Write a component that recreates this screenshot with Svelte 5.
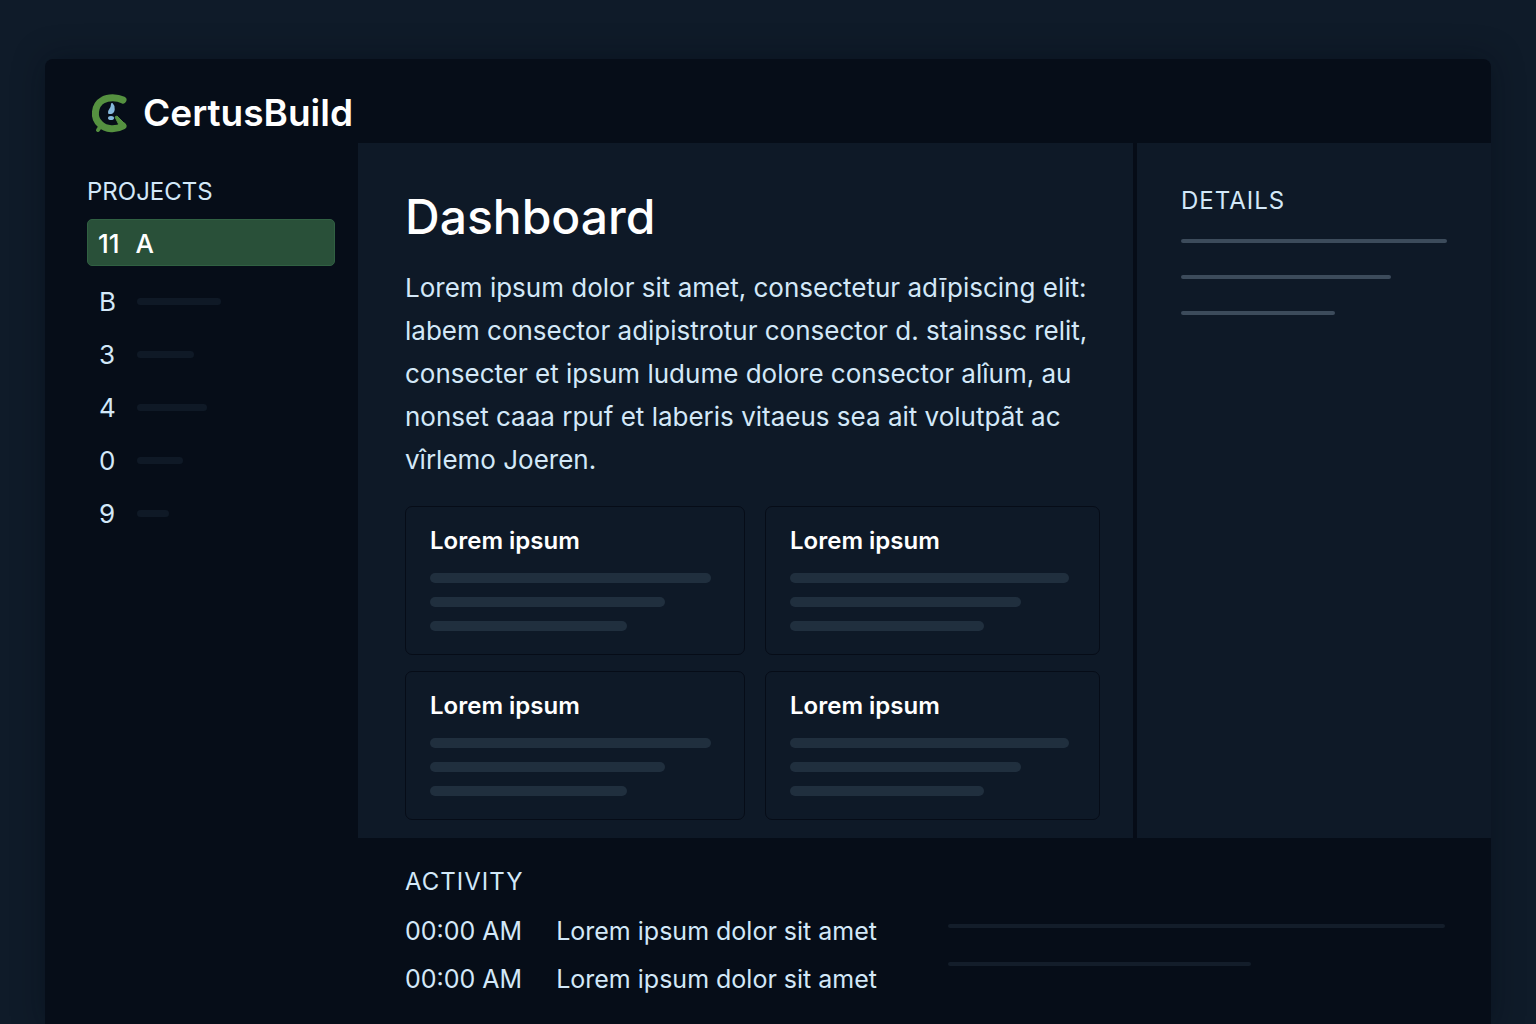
<script>
  const projects = [
    { mark: 'B', width: 84 },
    { mark: '3', width: 57 },
    { mark: '4', width: 70 },
    { mark: '0', width: 46 },
    { mark: '9', width: 32 },
  ];
  const cards = [
    { title: 'Lorem ipsum', bars: [97, 81, 68] },
    { title: 'Lorem ipsum', bars: [98, 81, 68] },
    { title: 'Lorem ipsum', bars: [97, 81, 68] },
    { title: 'Lorem ipsum', bars: [98, 81, 68] },
  ];
  const details = [100, 79, 58];
  const activity = [
    { time: '00:00 AM', text: 'Lorem ipsum dolor sit amet', bar: 100 },
    { time: '00:00 AM', text: 'Lorem ipsum dolor sit amet', bar: 61 },
  ];
</script>

<div class="page">
  <div class="window">
    <header class="topbar">
      <a class="brand" href="#home">
        <svg class="logo" viewBox="0 0 38 42" aria-hidden="true">
          <path d="M33 8C27 5 18 5 13 8C4 13 3 26 10 32C16 38 26 38 33 34" fill="none" stroke="#559140" stroke-width="7" stroke-linecap="round" stroke-linejoin="round" />
          <path d="M25 25L27 24L36 33L33 37L29 33Z" fill="#559140" stroke="#559140" stroke-width="1" stroke-linejoin="round" />
          <path d="M10 35L8 38" stroke="#559140" stroke-width="4" stroke-linecap="round" />
          <path d="M22 12C25 15 24 20 21 21H19C18 18 22 18 22 12Z" fill="#85b8dc" stroke="#85b8dc" stroke-width="2" stroke-linejoin="round" />
          <ellipse cx="21" cy="26" rx="3" ry="2" fill="#85b8dc" />
        </svg>
        <span>CertusBuild</span>
      </a>
    </header>

    <nav class="sidebar" aria-labelledby="projects-label">
      <h2 class="label" id="projects-label">PROJECTS</h2>
      <a class="project active" href="#a" aria-current="page"><span>11</span><span>A</span></a>
      <ul class="projects">
        {#each projects as p}
          <li>
            <a class="project" href="#project-{p.mark}">
              <span class="mark">{p.mark}</span>
              <span class="stub" style="width: {p.width}px"></span>
            </a>
          </li>
        {/each}
      </ul>
    </nav>

    <main class="main">
      <h1>Dashboard</h1>
      <p class="intro">
        Lorem ipsum dolor sit amet, consectetur adīpiscing elit:<br />
        labem consector adipistrotur consector d. stainssc relit,<br />
        consecter et ipsum ludume dolore consector alîum, au<br />
        nonset caaa rpuf et laberis vitaeus sea ait volutpãt ac<br />
        vîrlemo Joeren.
      </p>
      <div class="cards">
        {#each cards as card}
          <article class="card">
            <h3>{card.title}</h3>
            {#each card.bars as bar}
              <div class="bar" style="width: {bar}%"></div>
            {/each}
          </article>
        {/each}
      </div>
    </main>

    <aside class="details" aria-labelledby="details-label">
      <h2 class="label" id="details-label">DETAILS</h2>
      {#each details as line}
        <div class="line" style="width: {line}%"></div>
      {/each}
    </aside>

    <section class="activity" aria-labelledby="activity-label">
      <div>
        <h2 class="label" id="activity-label">ACTIVITY</h2>
        <ul class="events">
          {#each activity as item}
            <li><time>{item.time}</time><span>{item.text}</span></li>
          {/each}
        </ul>
      </div>
      <div class="tracks">
        {#each activity as item}
          <div class="track" style="width: {item.bar}%"></div>
        {/each}
      </div>
    </section>
  </div>
</div>

<style>
  :global(body) {
    margin: 0;
    background: #0f1b29;
  }

  .page {
    box-sizing: border-box;
    min-height: 100vh;
    display: flex;
    padding: 59px 45px 0;
    color: #d3e8f8;
    font-family: Inter, "Liberation Sans", sans-serif;
    font-size: 26px;
    line-height: 32px;
  }

  .window {
    flex: 1;
    display: grid;
    grid-template-columns: 313px minmax(0, 775fr) minmax(0, 358fr);
    grid-template-rows: 84px auto 1fr;
    background: #060d18;
    border-radius: 8px 8px 0 0;
    box-shadow: 0 0 32px rgba(4, 10, 20, 0.4);
  }

  h1,
  h2,
  h3,
  p,
  ul {
    margin: 0;
    padding: 0;
  }

  ul {
    list-style: none;
  }

  a {
    color: inherit;
    text-decoration: none;
  }

  .topbar {
    grid-column: 1 / -1;
    display: flex;
    align-items: center;
    padding: 24px 45px 0;
  }

  .brand {
    display: flex;
    align-items: center;
    gap: 15px;
    color: #fff;
    font-size: 37px;
    font-weight: 600;
  }

  .logo {
    width: 38px;
    height: 42px;
  }

  .label {
    font-size: 24px;
    font-weight: 400;
    letter-spacing: 1px;
  }

  .sidebar {
    grid-row: 2 / 4;
    padding: 33px 23px 0 42px;
  }

  .sidebar .label {
    letter-spacing: normal;
  }

  .project {
    display: flex;
    align-items: center;
    height: 53px;
    padding: 0 12px;
    gap: 16px;
  }

  .project.active {
    box-sizing: border-box;
    height: 47px;
    margin: 11px 0 9px;
    padding: 2px 10px 0;
    border: 1px solid #306042;
    border-radius: 5px;
    background: #295039;
    color: #fff;
    font-weight: 500;
  }

  .mark {
    width: 22px;
  }

  .stub {
    height: 7px;
    border-radius: 4px;
    background: #0f1926;
  }

  .main,
  .details {
    background: #0e1927;
  }

  .main {
    padding: 46px 33px 18px 47px;
  }

  h1 {
    color: #fff;
    font-size: 48px;
    font-weight: 500;
    line-height: 56px;
  }

  .intro {
    margin: 21px 0 25px;
    line-height: 43px;
    white-space: nowrap;
  }

  .cards {
    display: grid;
    grid-template-columns: minmax(0, 340fr) minmax(0, 335fr);
    gap: 16px 20px;
  }

  .card {
    display: flex;
    flex-direction: column;
    gap: 14px;
    padding: 18px 24px 23px;
    border: 1px solid #060c17;
    border-radius: 7px;
  }

  h3 {
    margin-bottom: 2px;
    color: #fff;
    font-size: 24px;
    font-weight: 600;
  }

  .bar {
    height: 10px;
    border-radius: 5px;
    background: #202f3e;
  }

  .details {
    display: flex;
    flex-direction: column;
    gap: 32px;
    padding: 42px 44px 0;
    border-left: 4px solid #060c17;
  }

  .details .label {
    margin-bottom: -10px;
  }

  .line {
    height: 4px;
    border-radius: 2px;
    background: #3c4b5b;
  }

  .activity {
    grid-column: 2 / -1;
    display: flex;
    gap: 71px;
    padding: 28px 46px 24px 47px;
  }

  .events {
    margin-top: 9px;
    font-size: 25px;
  }

  .events li {
    display: flex;
    gap: 34px;
    line-height: 48px;
    white-space: nowrap;
  }

  .tracks {
    flex: 1;
    display: flex;
    flex-direction: column;
    gap: 34px;
    padding-top: 58px;
  }

  .track {
    height: 4px;
    border-radius: 2px;
    background: #131d2a;
  }
</style>
